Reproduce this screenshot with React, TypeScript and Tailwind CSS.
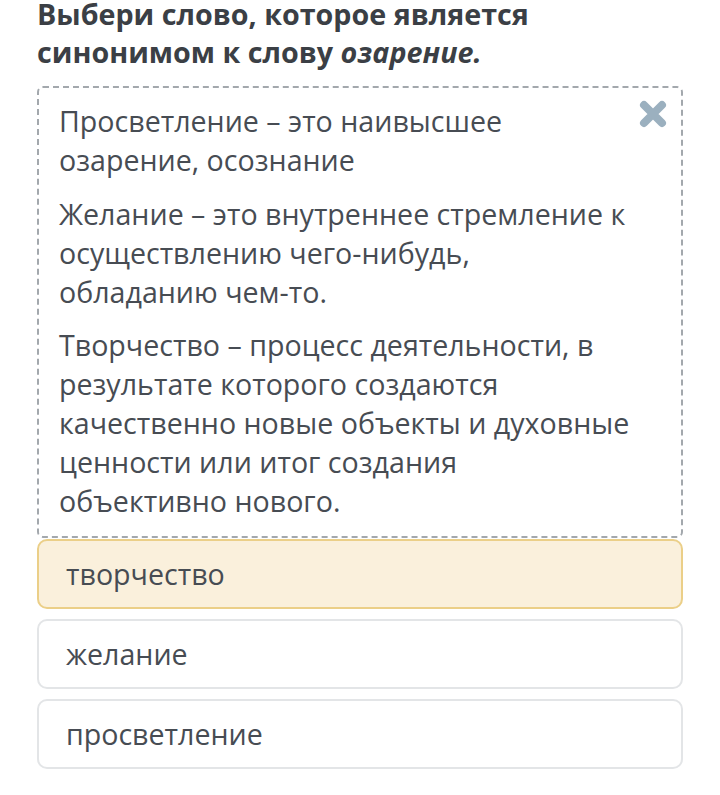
import React from "react";

export default function App() {
  const font = { fontFamily: '"Open Sans", "Noto Sans", sans-serif' };
  return (
    <div className="w-[720px] h-[795px] bg-white overflow-hidden" style={font}>
      <div className="px-[37px]">
        <h1 className="mt-[-5px] text-[28.7px] leading-[38px] font-bold text-[#3b3f45] whitespace-nowrap">
          Выбери слово, которое является
          <br />
          синонимом к слову <i>озарение.</i>
        </h1>
        <div className="relative mt-[15px] rounded-[6px] border-2 border-dashed border-[#a3a8ad] pl-[20px] pr-[30px] pt-[13px] pb-[16px] text-[28.6px] leading-[39px] text-[#474c53] whitespace-nowrap">
          <button className="absolute right-[11px] top-[9px] text-[#9bb0bf]">
            <svg width="34" height="34" viewBox="0 0 34 34">
              <path d="M8 8 L26 26 M26 8 L8 26" stroke="#9bb0bf" strokeWidth="8" strokeLinecap="round" />
            </svg>
          </button>
          <p>Просветление – это наивысшее<br />озарение, осознание</p>
          <p className="mt-[15px]">Желание – это внутреннее стремление к<br />осуществлению чего-нибудь,<br />обладанию чем-то.</p>
          <p className="mt-[14px]">Творчество – процесс деятельности, в<br />результате которого создаются<br />качественно новые объекты и духовные<br />ценности или итог создания<br />объективно нового.</p>
        </div>
        <div className="mt-[1px] flex flex-col gap-[10px]">
          <div className="h-[70px] rounded-[10px] border-2 border-[#ebcf88] bg-[#faf0dc] px-[27px] flex items-center text-[28.6px] text-[#474c53]">
            творчество
          </div>
          <div className="h-[70px] rounded-[10px] border-2 border-[#e3e5e7] bg-white px-[27px] flex items-center text-[28.6px] text-[#474c53]">
            желание
          </div>
          <div className="h-[70px] rounded-[10px] border-2 border-[#e3e5e7] bg-white px-[27px] flex items-center text-[28.6px] text-[#474c53]">
            просветление
          </div>
        </div>
      </div>
    </div>
  );
}
